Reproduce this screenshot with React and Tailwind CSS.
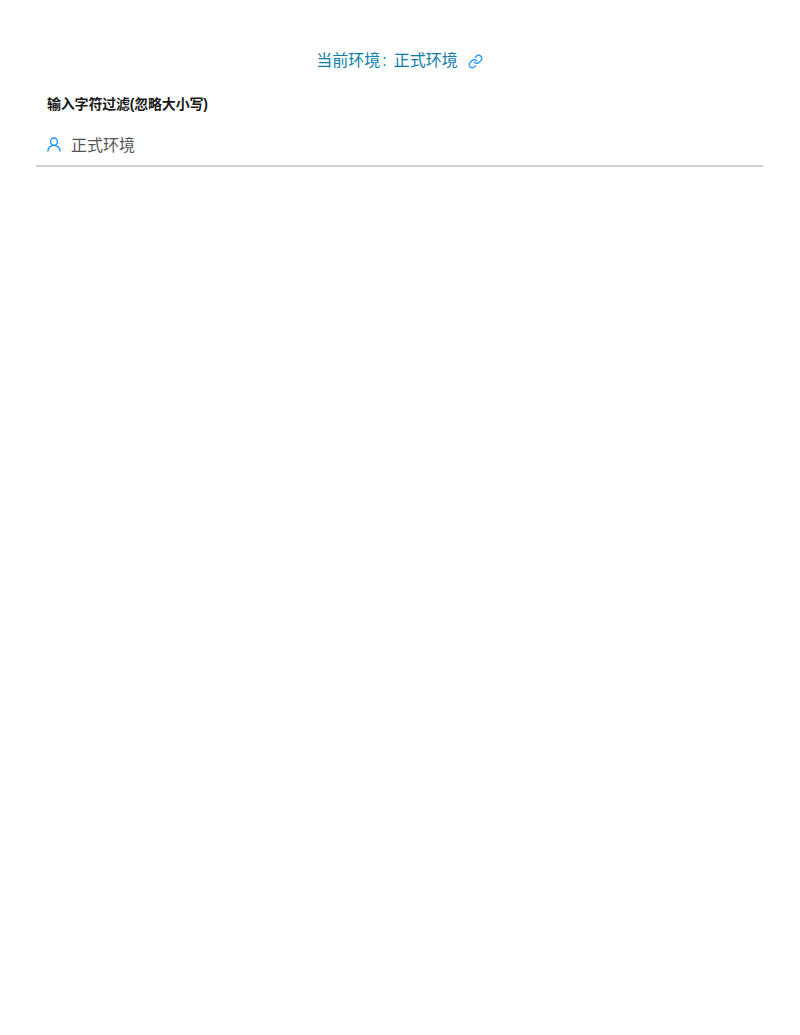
import { Link } from "lucide-react";

const font = "font-['Liberation_Sans','Noto_Sans_CJK_SC',sans-serif]";

export default function App() {
  return (
    <div className={`min-h-screen bg-white ${font}`}>
      <div className="pl-9 pr-[37px] pt-[50px]">
        <div className="flex items-center justify-center text-base leading-[22px] text-[#0b7ea8]">
          <span>当前环境</span>
          <span className="ml-[2px] mr-[7px]">:</span>
          <span>正式环境</span>
          <Link className="ml-[10px] h-[15px] w-[15px] text-[#1890ff]" strokeWidth={2} />
        </div>
        <div className="mt-[22px] px-[11px] text-sm font-bold leading-5 tracking-[-0.2px] text-[#1a1a1a]">输入字符过滤(忽略大小写)</div>
        <div className="mt-[11px] flex h-[42px] items-center border-b-2 border-[#d0d0d0] px-[11px]">
          <svg viewBox="0 0 16 16" className="mb-[2px] h-[15px] w-[14px] text-[#1890ff]" fill="none" stroke="currentColor" strokeWidth="1.5" preserveAspectRatio="none">
            <circle cx="8" cy="5" r="3.9" />
            <path d="M1 15.500c0-3.800 3-6.600 7-6.600s7 2.800 7 6.600" />
          </svg>
          <span className="ml-[10px] pt-[2px] text-base text-[#555]">正式环境</span>
        </div>
      </div>
    </div>
  );
}
